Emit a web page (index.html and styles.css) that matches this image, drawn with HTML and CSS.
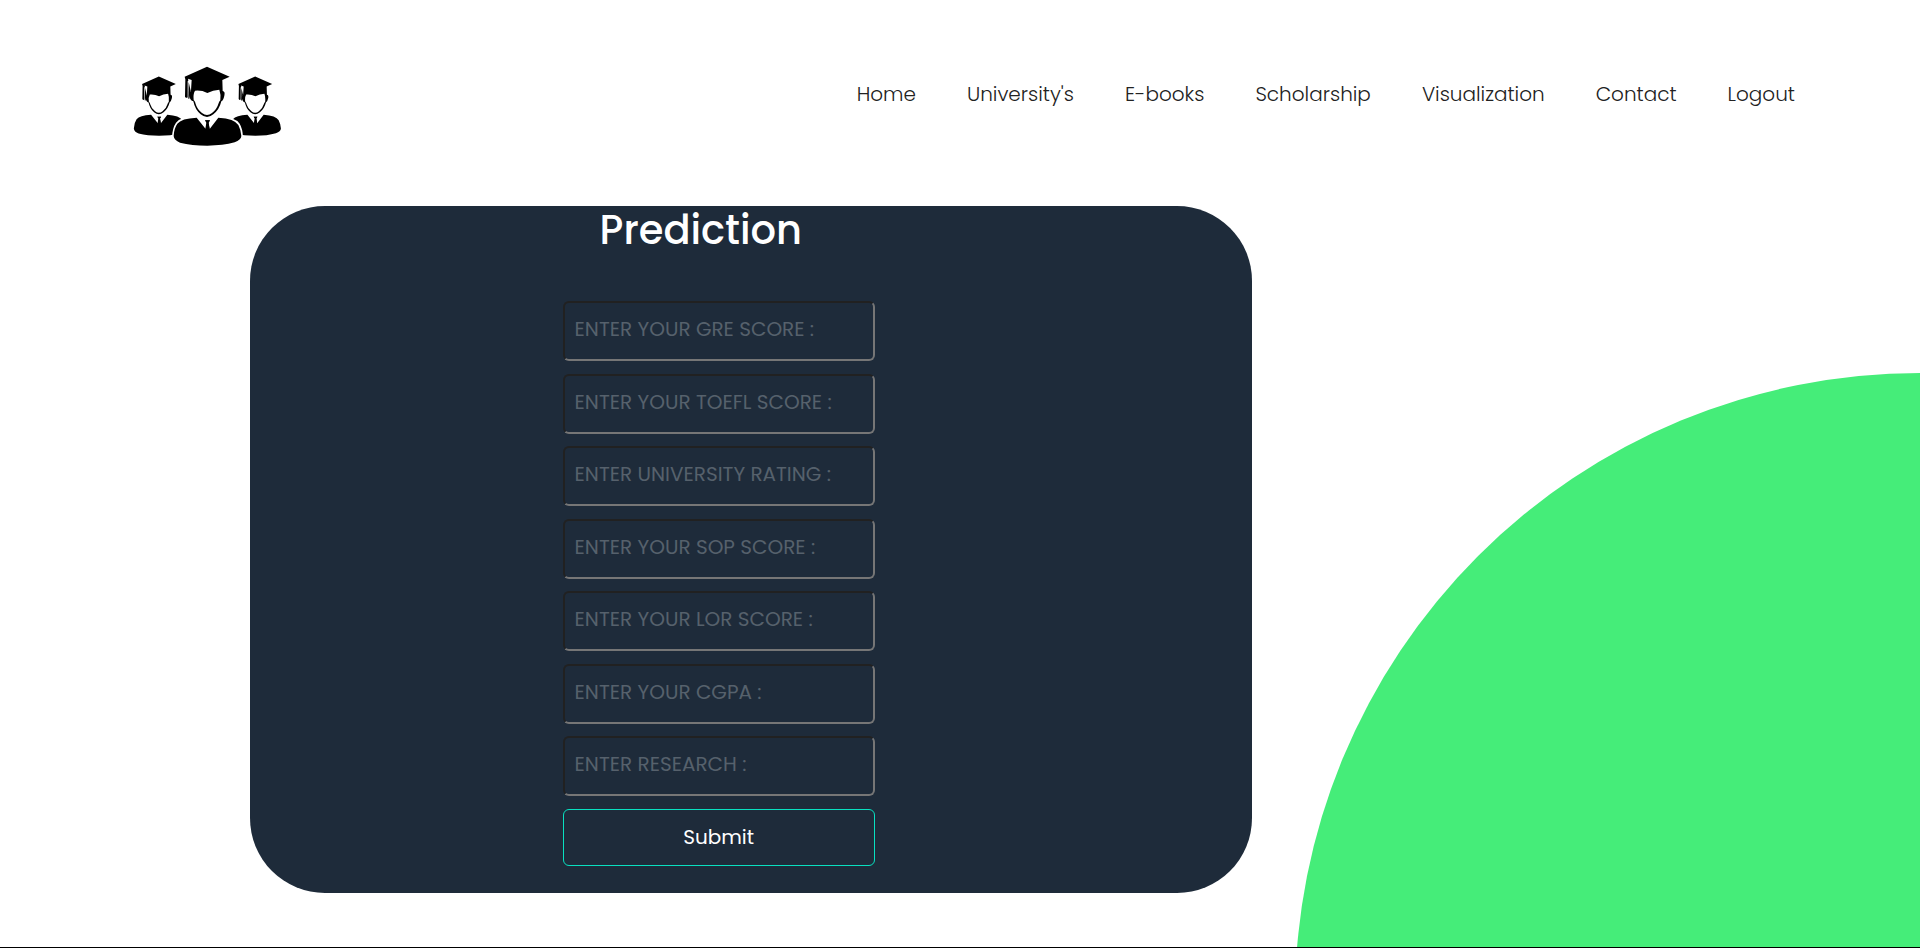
FILE: index.html
```html
<!DOCTYPE html>
<html lang="en">
<head>
<meta charset="utf-8">
<title>Prediction</title>
<link rel="stylesheet" href="styles.css">
</head>
<body>
<div class="page">
  <div class="circle"></div>
  <header class="header">
    <a class="logo" href="#" aria-label="Graduates">
      <svg viewBox="40 48 444 243" width="148" height="81">
        <defs>
          <g id="grad">
            <path d="M195 80L262 50L330 80L308 90L309 123Q317 124 314 137Q311 151 305 154Q299 179 281 193Q262 209 243 193Q226 179 221 154Q211 151 209 137Q208 127 214 122L216 90L205 86Q208 92 204 94L204 142Q200 146 196 140L197 88ZM226 122Q220 132 222 150Q227 155 228 162Q232 177 247 189Q262 201 277 189Q292 177 296 162Q298 155 302 151Q304 132 299 119Q280 120 263 129Q246 120 226 122Z" fill-rule="evenodd"/>
            <path d="M207 96L213 122L209 146L206 146Z"/>
            <path d="M231 203L258 237L262 218L256 211H271L266 218L270 237L296 203Q345 206 356 225Q364 240 365 258Q364 270 345 277Q310 287 263 287Q216 287 181 278Q163 271 162 258Q163 235 173 221Q185 205 231 203Z"/>
            <path d="M256 211H271L267 218L270 237L263 243L257 237L260 218Z"/>
          </g>
        </defs>
        <use href="#grad" transform="translate(-79 42) scale(.75)"/>
        <use href="#grad" transform="translate(210 42) scale(.75)"/>
        <path d="M231 198Q181 200 169 218Q158 234 157 262H370Q369 236 360 221Q347 201 296 198Z" fill="#fff"/>
        <use href="#grad"/>
      </svg>
    </a>
    <nav class="nav">
      <a href="#">Home</a>
      <a href="#">University's</a>
      <a href="#">E-books</a>
      <a href="#">Scholarship</a>
      <a href="#">Visualization</a>
      <a href="#">Contact</a>
      <a href="#">Logout</a>
    </nav>
  </header>
  <main class="card">
    <form class="form">
      <h1 class="title">Prediction</h1>
      <div class="fields">
        <input class="field" type="text" aria-label="GRE score" placeholder="ENTER YOUR GRE SCORE :">
        <input class="field" type="text" aria-label="TOEFL score" placeholder="ENTER YOUR TOEFL SCORE :">
        <input class="field" type="text" aria-label="University rating" placeholder="ENTER UNIVERSITY RATING :">
        <input class="field" type="text" aria-label="SOP score" placeholder="ENTER YOUR SOP SCORE :">
        <input class="field" type="text" aria-label="LOR score" placeholder="ENTER YOUR LOR SCORE :">
        <input class="field" type="text" aria-label="CGPA" placeholder="ENTER YOUR CGPA :">
        <input class="field" type="text" aria-label="Research" placeholder="ENTER RESEARCH :">
        <button class="submit" type="submit">Submit</button>
      </div>
    </form>
  </main>
</div>
</body>
</html>
```
FILE: styles.css
```css
* {
  box-sizing: border-box;
}

body {
  margin: 0;
  background: #fff;
  font-family: Poppins, Inter, "Open Sans", sans-serif;
}

.page {
  position: relative;
  min-height: 100vh;
  overflow: hidden;
  border-bottom: 1px solid #000;
}

.circle {
  position: absolute;
  inset: 0;
  background: #45ed79;
  clip-path: circle(625px at right 998px);
}

.header {
  position: relative;
  display: flex;
  justify-content: space-between;
  align-items: flex-start;
  padding: 66px 125px 0 133px;
}

.logo {
  display: block;
  color: #000;
}

.logo svg {
  display: block;
}

.nav {
  display: flex;
  gap: 51px;
  padding-top: 13px;
}

.nav a {
  color: #222;
  font-size: 20px;
  font-weight: 300;
  line-height: 30px;
  text-decoration: none;
}

.card {
  position: relative;
  width: 52.2%;
  margin: 59px 0 54px 13%;
  padding-bottom: 27px;
  border-radius: 75px;
  background: #1e2b3a;
}

.form {
  width: 312px;
  margin-left: 313px;
}

.title {
  margin: 0 0 47px;
  padding-left: 37px;
  color: #fff;
  font-size: 40px;
  font-weight: 500;
  line-height: 48px;
}

.fields {
  display: flex;
  flex-direction: column;
  justify-content: space-between;
  min-height: 565px;
}

.field {
  width: 100%;
  height: 60px;
  padding: 0 10px 4px;
  border: 2px inset #767676;
  border-radius: 6px;
  background: transparent;
  color: #fff;
  font: 400 20px/30px Poppins, Inter, "Open Sans", sans-serif;
}

.field::placeholder {
  color: #56616c;
  opacity: 1;
}

.submit {
  width: 100%;
  height: 57px;
  padding: 0;
  border: 1px solid #09e0c0;
  border-radius: 6px;
  background: transparent;
  color: #fff;
  font: 400 20px/30px Poppins, Inter, "Open Sans", sans-serif;
}
```
